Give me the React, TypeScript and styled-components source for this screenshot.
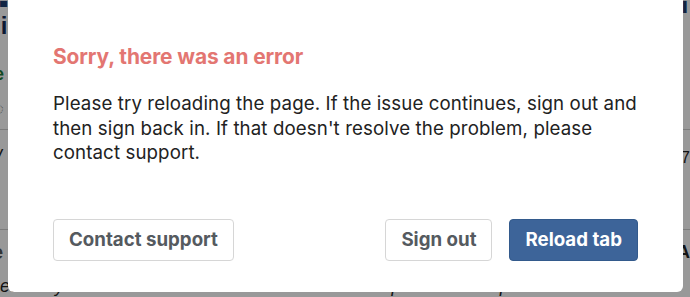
import styled, { createGlobalStyle } from "styled-components";

const GlobalStyle = createGlobalStyle`
  html, body {
    margin: 0;
    padding: 0;
    background: #ffffff;
    font-family: Inter, "Noto Sans", sans-serif;
    overflow: hidden;
  }
`;

const Page = styled.div`
  width: 690px;
  height: 297px;
  overflow: hidden;
  display: flex;
  flex-direction: column;
  font-family: "Liberation Sans", Inter, sans-serif;
`;

const PageRow = styled.div<{ h: number; line?: boolean }>`
  height: ${({ h }) => h}px;
  flex-shrink: 0;
  display: flex;
  align-items: center;
  justify-content: space-between;
  border-bottom: ${({ line }) => (line ? "1px solid #cfcfcf" : "none")};
  box-sizing: border-box;
`;

const PageText = styled.span<{
  color?: string;
  size?: number;
  weight?: number;
  italic?: boolean;
  shift?: number;
}>`
  color: ${({ color }) => color || "#222"};
  font-size: ${({ size }) => size || 14}px;
  font-weight: ${({ weight }) => weight || 400};
  font-style: ${({ italic }) => (italic ? "italic" : "normal")};
  margin-left: ${({ shift }) => shift || 0}px;
  white-space: nowrap;
`;

const Overlay = styled.div`
  position: fixed;
  inset: 0;
  background: rgba(0, 0, 0, 0.4);
  display: flex;
  align-items: flex-start;
  padding-left: 8px;
`;

const Modal = styled.div`
  width: 675px;
  height: 292px;
  box-sizing: border-box;
  background: #ffffff;
  border-radius: 0 0 6px 6px;
  padding: 43px 45px 0 45px;
  display: flex;
  flex-direction: column;
  font-family: Inter, "Noto Sans", sans-serif;
`;

const Title = styled.h2`
  margin: 0;
  color: #e37672;
  font-size: 20.9px;
  font-weight: 700;
  line-height: 28px;
  letter-spacing: -0.1px;
`;

const Message = styled.p`
  margin: 21px 0 0 0;
  color: #222222;
  font-size: 18.7px;
  line-height: 24.5px;
  font-weight: 400;
  letter-spacing: 0.1px;
`;

const Actions = styled.div`
  margin-top: 53px;
  display: flex;
  align-items: center;
  gap: 17px;
`;

const Spacer = styled.div`
  flex: 1;
`;

const Button = styled.button<{ primary?: boolean }>`
  height: 42px;
  padding: 0 15px;
  border-radius: 4px;
  font-family: Inter, "Noto Sans", sans-serif;
  font-size: 18.7px;
  font-weight: 700;
  cursor: pointer;
  border: 1px solid ${({ primary }) => (primary ? "#335a8c" : "#d6d6d6")};
  background: ${({ primary }) => (primary ? "#3d6499" : "#ffffff")};
  color: ${({ primary }) => (primary ? "#ffffff" : "#555a5f")};
`;

export default function App() {
  return (
    <>
      <GlobalStyle />
      <Page>
        <PageRow h={12}>
          <PageText color="#1d3c6e" size={10} weight={700}>▀</PageText>
          <PageText color="#1d3c6e" size={10}>▌</PageText>
        </PageRow>
        <PageRow h={28}>
          <PageText color="#142b55" size={24} weight={700} shift={-14}>hi</PageText>
        </PageRow>
        <PageRow h={22}>
          <PageText color="#666" size={12} shift={-3}>l</PageText>
        </PageRow>
        <PageRow h={25}>
          <PageText color="#1f7a3a" size={18} weight={700} shift={-6}>e</PageText>
        </PageRow>
        <PageRow h={43} line>
          <PageText color="#888" size={20} shift={-8}>◌</PageText>
        </PageRow>
        <PageRow h={55}>
          <PageText color="#222" size={20} italic shift={-4}>/</PageText>
          <PageText color="#222" size={16}>7</PageText>
        </PageRow>
        <PageRow h={45} line>
          <span />
        </PageRow>
        <PageRow h={45}>
          <PageText color="#555" size={20} weight={700} shift={-8}>e</PageText>
          <PageText color="#222" size={18} weight={700}>A</PageText>
        </PageRow>
        <PageRow h={22}>
          <PageText color="#222" size={18} italic>
            eeed by Kathleen Anderson December 2022 Responded with questions
          </PageText>
        </PageRow>
      </Page>
      <Overlay>
        <Modal>
          <Title>Sorry, there was an error</Title>
          <Message>
            Please try reloading the page. If the issue continues, sign out and
            then sign back in. If that doesn't resolve the problem, please
            contact support.
          </Message>
          <Actions>
            <Button>Contact support</Button>
            <Spacer />
            <Button>Sign out</Button>
            <Button primary>Reload tab</Button>
          </Actions>
        </Modal>
      </Overlay>
    </>
  );
}
